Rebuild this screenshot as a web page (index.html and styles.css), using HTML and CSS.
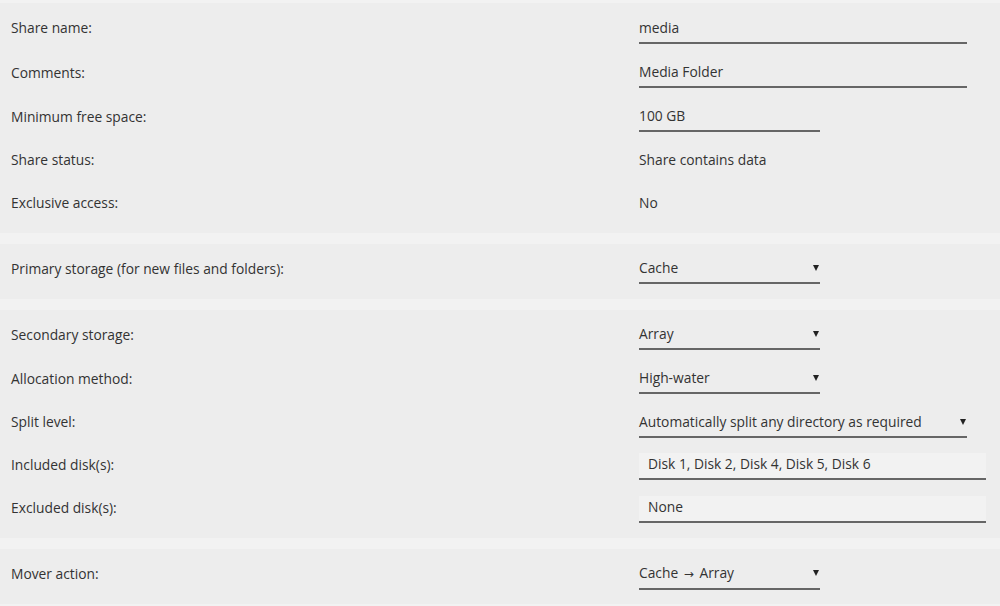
FILE: index.html
```html
<!DOCTYPE html>
<html lang="en">
<head>
    <meta charset="UTF-8">
    <meta name="viewport" content="width=device-width, initial-scale=1.0">
    <title>Share Settings</title>
    <link rel="stylesheet" href="styles.css">
</head>
<body>
    <!-- General share settings -->
    <div class="section">
        <div class="row row-tall">
            <div class="label">Share name:</div>
            <div class="field"><div class="text-input wide">media</div></div>
        </div>
        <div class="row">
            <div class="label">Comments:</div>
            <div class="field"><div class="text-input wide">Media Folder</div></div>
        </div>
        <div class="row">
            <div class="label">Minimum free space:</div>
            <div class="field"><div class="text-input narrow">100 GB</div></div>
        </div>
        <div class="row row-short">
            <div class="label">Share status:</div>
            <div class="field"><span class="plain">Share contains data</span></div>
        </div>
        <div class="row row-short">
            <div class="label">Exclusive access:</div>
            <div class="field"><span class="plain">No</span></div>
        </div>
    </div>

    <!-- Primary storage -->
    <div class="section">
        <div class="row">
            <div class="label">Primary storage (for new files and folders):</div>
            <div class="field">
                <div class="select narrow"><span>Cache</span><span class="arrow"></span></div>
            </div>
        </div>
    </div>

    <!-- Secondary storage -->
    <div class="section">
        <div class="row">
            <div class="label">Secondary storage:</div>
            <div class="field">
                <div class="select narrow"><span>Array</span><span class="arrow"></span></div>
            </div>
        </div>
        <div class="row">
            <div class="label">Allocation method:</div>
            <div class="field">
                <div class="select narrow"><span>High-water</span><span class="arrow"></span></div>
            </div>
        </div>
        <div class="row row-short">
            <div class="label">Split level:</div>
            <div class="field">
                <div class="select wide"><span>Automatically split any directory as required</span><span class="arrow"></span></div>
            </div>
        </div>
        <div class="row row-short">
            <div class="label">Included disk(s):</div>
            <div class="field"><div class="box-input">Disk 1, Disk 2, Disk 4, Disk 5, Disk 6</div></div>
        </div>
        <div class="row row-short">
            <div class="label">Excluded disk(s):</div>
            <div class="field"><div class="box-input">None</div></div>
        </div>
    </div>

    <!-- Mover -->
    <div class="section">
        <div class="row">
            <div class="label">Mover action:</div>
            <div class="field">
                <div class="select narrow"><span>Cache <span class="to">&rarr;</span> Array</span><span class="arrow"></span></div>
            </div>
        </div>
    </div>
</body>
</html>
```

FILE: styles.css
```css
:root {
    --page-bg: #f2f2f2;
    --section-bg: #ededed;
    --text-color: #333;
    --line-color: #666;
}

body {
    font-family: 'Open Sans', 'Noto Sans', sans-serif;
    font-size: 13.8px;
    color: var(--text-color);
    margin: 0;
    padding-top: 3px;
    background-color: var(--page-bg);
}

.section {
    background-color: var(--section-bg);
    padding: 2px 0 9px;
    margin-bottom: 11px;
}

.row {
    display: grid;
    grid-template-columns: 628px 1fr;
    align-items: center;
    height: 44px;
    padding-left: 11px;
}

.row-tall {
    height: 45px;
}

.row-short {
    height: 43px;
}

.field {
    display: flex;
    align-items: center;
}

.text-input,
.select {
    box-sizing: border-box;
    padding: 7px 0 5px;
    line-height: 18px;
    border-bottom: 2px solid var(--line-color);
}

.wide {
    width: 328px;
}

.narrow {
    width: 181px;
}

.select {
    display: flex;
    justify-content: space-between;
    align-items: center;
}

.select .to {
    font-family: 'DejaVu Sans', sans-serif;
    font-size: 12px;
    margin: 0 2px;
}

.arrow {
    width: 0;
    height: 0;
    margin-right: 1px;
    border-left: 3.5px solid transparent;
    border-right: 3.5px solid transparent;
    border-top: 6px solid #222;
}

.box-input {
    box-sizing: border-box;
    width: 347px;
    margin-top: 4px;
    padding: 2px 9px 5px;
    line-height: 18px;
    background-color: var(--page-bg);
    border-bottom: 2px solid var(--line-color);
}
```
